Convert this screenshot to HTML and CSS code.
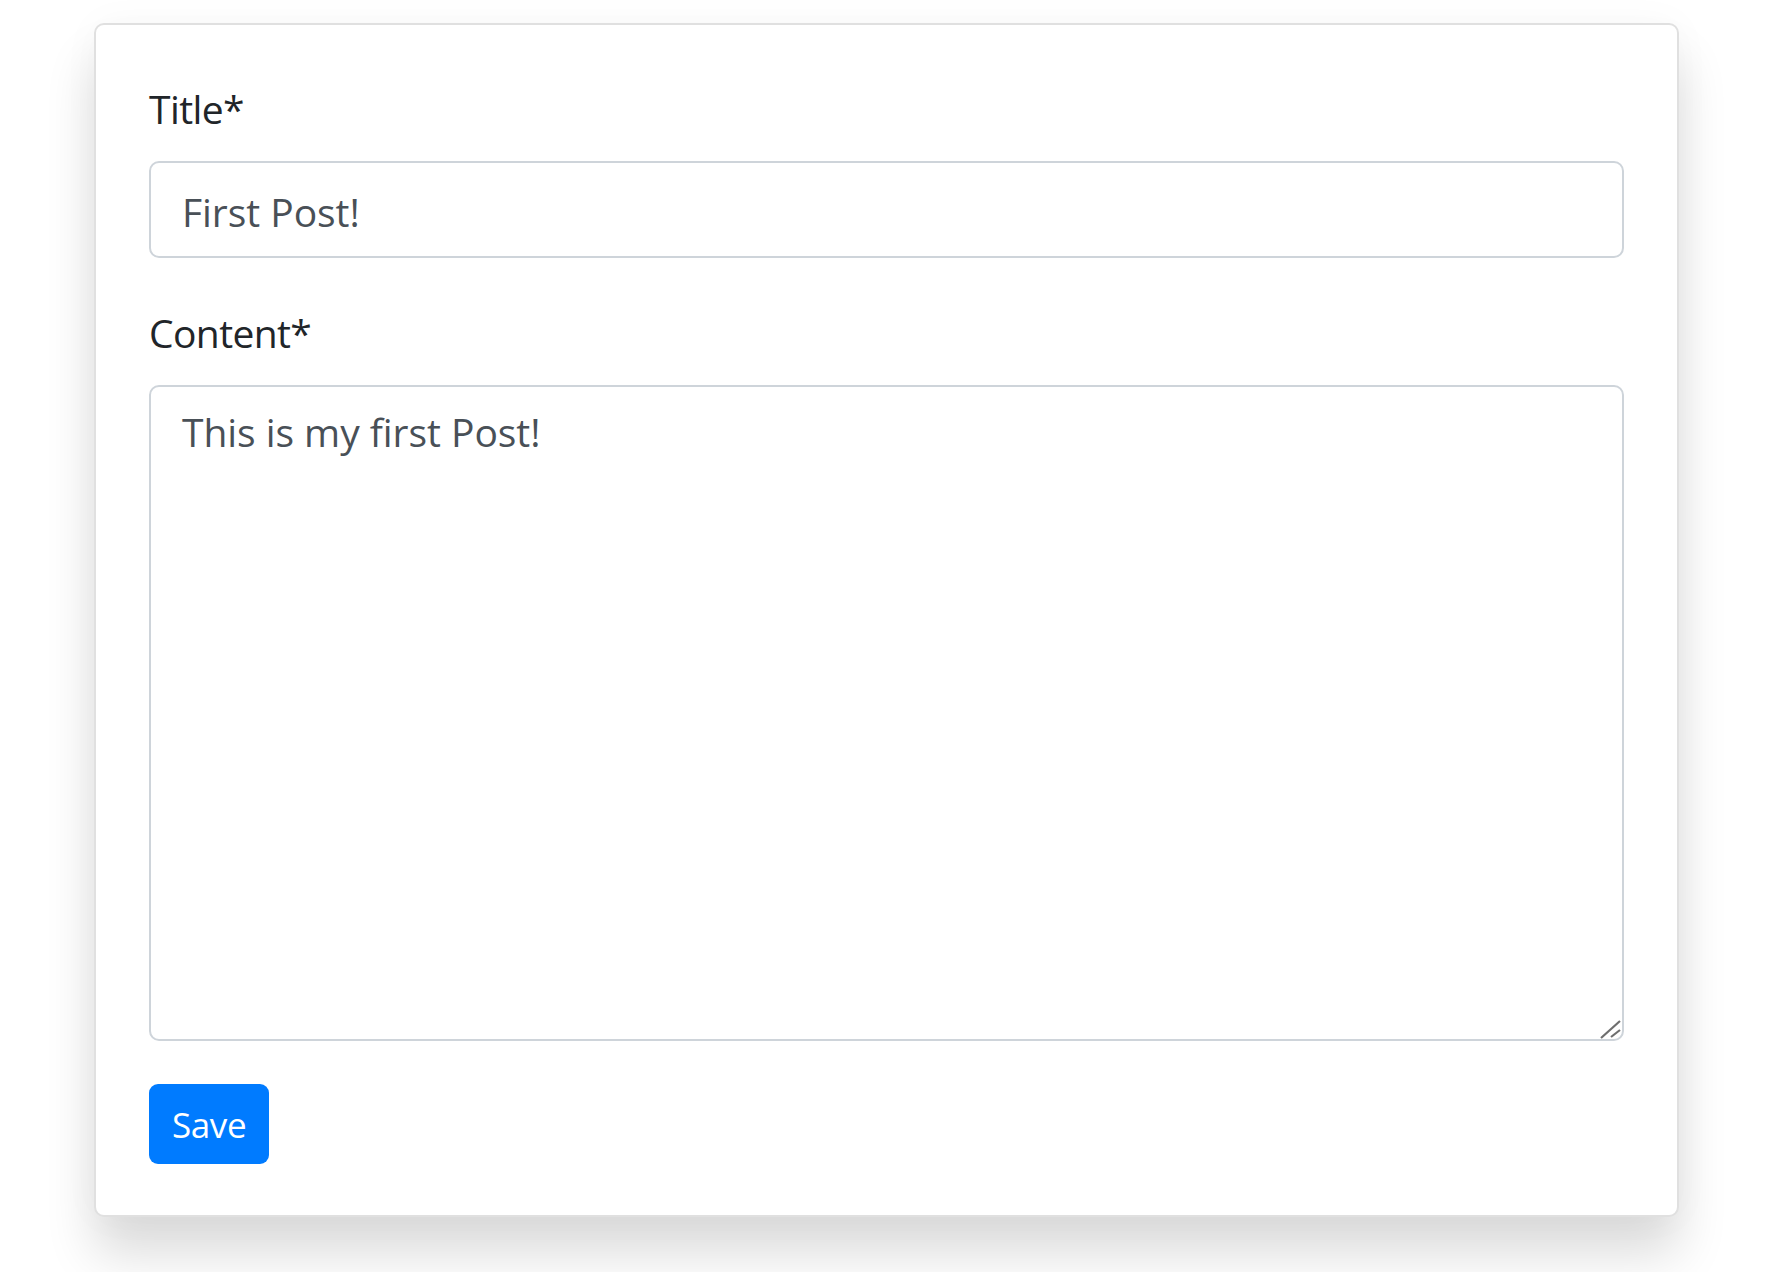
FILE: index.html
```html
<!DOCTYPE html>
<html lang="en">
<head>
<meta charset="utf-8">
<title>New Post</title>
<link rel="stylesheet" href="styles.css">
</head>
<body>
<div class="page">
  <form class="card">
    <div class="form-group">
      <label class="label" for="title">Title*</label>
      <input class="control input" id="title" type="text" value="First Post!">
    </div>
    <div class="form-group">
      <label class="label" for="content">Content*</label>
      <div class="area-wrap">
        <textarea class="control textarea" id="content">This is my first Post!</textarea>
        <svg class="grip" width="22" height="21" viewBox="0 0 22 21" aria-hidden="true">
          <line x1="1" y1="19" x2="20" y2="2" stroke="#6e6e6e" stroke-width="2.2"/>
          <line x1="11" y1="18" x2="20" y2="11" stroke="#6e6e6e" stroke-width="2.2"/>
        </svg>
      </div>
    </div>
    <button class="btn" type="button">Save</button>
  </form>
</div>
</body>
</html>
```

FILE: styles.css
```css
html, body {
  margin: 0;
  padding: 0;
  background: #ffffff;
}

body {
  font-family: "Open Sans", "Noto Sans", sans-serif;
  color: #212529;
}

.page {
  padding: 23px 0 90px 94px;
}

.card {
  box-sizing: border-box;
  width: 1585px;
  margin: 0;
  padding: 54px 53px 51px 53px;
  background: #ffffff;
  border: 2px solid #e0e0e0;
  border-radius: 10px;
  box-shadow: 0 37px 50px rgba(0, 0, 0, 0.14), 0 0 40px rgba(0, 0, 0, 0.03);
  display: flex;
  flex-direction: column;
  align-items: flex-start;
}

.form-group {
  width: 100%;
  display: flex;
  flex-direction: column;
  margin-bottom: 45px;
}

.form-group:nth-of-type(2) {
  margin-bottom: 43px;
}

.label {
  display: block;
  font-size: 39px;
  letter-spacing: -0.6px;
  line-height: 60px;
  color: #212529;
  margin-bottom: 22px;
}

.control {
  box-sizing: border-box;
  width: 100%;
  font-family: "Open Sans", "Noto Sans", sans-serif;
  font-size: 39px;
  letter-spacing: -0.05px;
  color: #495057;
  background: #ffffff;
  border: 2px solid #ced4da;
  border-radius: 10px;
  outline: none;
  margin: 0;
}

.input {
  height: 97px;
  padding: 4px 31px 0 31px;
  line-height: normal;
}

.area-wrap {
  position: relative;
  width: 100%;
  display: flex;
}

.textarea {
  height: 656px;
  padding: 18px 31px;
  line-height: normal;
  resize: none;
  overflow: hidden;
}

.grip {
  position: absolute;
  right: 2px;
  bottom: 1px;
}

.btn {
  box-sizing: border-box;
  height: 80px;
  padding: 0 23px;
  font-family: "Open Sans", "Noto Sans", sans-serif;
  font-size: 35px;
  letter-spacing: -0.4px;
  line-height: 1;
  color: #ffffff;
  background: #007bff;
  border: none;
  border-radius: 9px;
  display: flex;
  align-items: center;
  justify-content: center;
  cursor: pointer;
}
```
